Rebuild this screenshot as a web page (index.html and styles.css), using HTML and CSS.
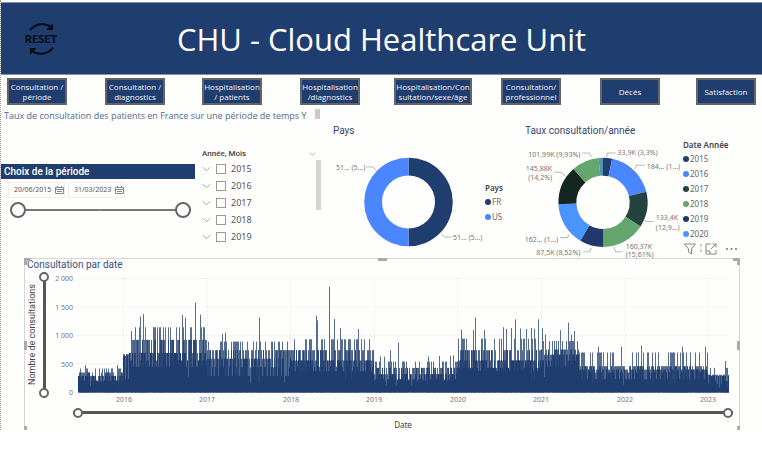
FILE: index.html
```html
<!DOCTYPE html>
<html lang="fr">
<head>
<meta charset="utf-8">
<title>CHU - Cloud Healthcare Unit</title>
<link rel="stylesheet" href="styles.css">
</head>
<body>
<div class="report">
  <header class="banner">
    <button class="reset" type="button" aria-label="Reset">
      <svg class="reset-arrow" viewBox="0 0 28 9"><path d="M2 7.500C8-.5 19-.5 25 5"/><path d="M26 0v7h-7z" class="tip"/></svg>
      <span class="reset-text">RESET</span>
      <svg class="reset-arrow" viewBox="0 0 28 9"><path d="M26 1.500C20 9.500 9 9.500 3 4"/><path d="M2 9V2h7z" class="tip"/></svg>
    </button>
    <h1 class="banner-title">CHU - Cloud Healthcare Unit</h1>
  </header>

  <nav class="tabs">
    <button type="button" class="tab">Consultation /<br>période</button>
    <button type="button" class="tab">Consultation /<br>diagnostics</button>
    <button type="button" class="tab">Hospitalisation<br>/ patients</button>
    <button type="button" class="tab">Hospitalisation<br>/diagnostics</button>
    <button type="button" class="tab tab-wide">Hospitalisation/Con<br>sultation/sexe/âge</button>
    <button type="button" class="tab">Consultation/<br>professionnel</button>
    <button type="button" class="tab">Décés</button>
    <button type="button" class="tab">Satisfaction</button>
  </nav>

  <div class="subtitle">
    <p>Taux de consultation des patients en France sur une période de temps Y</p>
    <span class="scroll-stub"></span>
  </div>

  <main>
    <div class="visuals">
      <section class="period">
        <h2 class="period-title">Choix de la période</h2>
        <div class="dates">
          <label class="date-box"><input type="text" value="20/06/2015" aria-label="Date de début"><svg viewBox="0 0 9 9"><path d="M.5 1.500h8v6h-8zM.5 3.500h8M2.500 0v2M6.500 0v2M2 5.500h5"/></svg></label>
          <label class="date-box"><input type="text" value="31/03/2023" aria-label="Date de fin"><svg viewBox="0 0 9 9"><path d="M.5 1.500h8v6h-8zM.5 3.500h8M2.500 0v2M6.500 0v2M2 5.500h5"/></svg></label>
        </div>
        <div class="range range-period">
          <input type="range" value="0" aria-label="Début de la période">
          <input type="range" value="100" aria-label="Fin de la période">
        </div>
      </section>

      <section class="years">
        <div class="years-head"><h2>Année, Mois</h2><svg class="chevron small" viewBox="0 0 10 6"><path d="M1 1l4 4 4-4"/></svg></div>
        <div class="years-body">
          <ul>
            <li><svg class="chevron" viewBox="0 0 10 6"><path d="M1 1l4 4 4-4"/></svg><label><input type="checkbox">2015</label></li>
            <li><svg class="chevron" viewBox="0 0 10 6"><path d="M1 1l4 4 4-4"/></svg><label><input type="checkbox">2016</label></li>
            <li><svg class="chevron" viewBox="0 0 10 6"><path d="M1 1l4 4 4-4"/></svg><label><input type="checkbox">2017</label></li>
            <li><svg class="chevron" viewBox="0 0 10 6"><path d="M1 1l4 4 4-4"/></svg><label><input type="checkbox">2018</label></li>
            <li><svg class="chevron" viewBox="0 0 10 6"><path d="M1 1l4 4 4-4"/></svg><label><input type="checkbox">2019</label></li>
          </ul>
          <span class="scrollbar"></span>
        </div>
      </section>

      <section class="donut donut-pays">
        <h2 class="visual-title">Pays</h2>
        <div class="donut-body">
          <svg class="donut-chart" viewBox="330 138 153 119" role="img" aria-label="Pays">
            <g id="ring-pays"></g>
            <path class="leader" d="M366 167h7l4 4M441 234l4 3h7"/>
            <text x="336" y="170">51... (5...)</text>
            <text x="453" y="240">51... (5...)</text>
          </svg>
          <div class="legend legend-pays">
            <h3>Pays</h3>
            <ul><li><i class="c-navy"></i>FR</li><li><i class="c-blue"></i>US</li></ul>
          </div>
        </div>
      </section>

      <section class="donut donut-taux">
        <h2 class="visual-title">Taux consultation/année</h2>
        <div class="donut-body">
          <svg class="donut-chart" viewBox="523 138 158 119" role="img" aria-label="Taux consultation par année">
            <g id="ring-taux"></g>
            <path class="leader" d="M583 153h7l2 4M616 153h-8l-1 4M645 165h-8l-2 4M555 172h7l4 4M654 221h-7l-3-1M561 237h7l2-3M584 251h6l2-4M623 251h-7l-2-5"/>
            <text x="581" y="157" class="end">101,99K (9,93%)</text>
            <text x="618" y="155">33,9K (3,3%)</text>
            <text x="647" y="169">184... (1...)</text>
            <text x="553" y="171" class="end">145,88K</text>
            <text x="553" y="180" class="end">(14,2%)</text>
            <text x="656" y="219">133,4K</text>
            <text x="656" y="229">(12,9...)</text>
            <text x="559" y="241" class="end">162... (1...)</text>
            <text x="581" y="254" class="end">87,5K (8,52%)</text>
            <text x="626" y="248">160,37K</text>
            <text x="626" y="256">(15,61%)</text>
          </svg>
          <div class="legend legend-taux">
            <h3>Date Année</h3>
            <ul>
              <li><i class="c-navy"></i>2015</li><li><i class="c-blue"></i>2016</li><li><i class="c-teal"></i>2017</li>
              <li><i class="c-green"></i>2018</li><li><i class="c-indigo"></i>2019</li><li><i class="c-sky"></i>2020</li>
            </ul>
            <div class="tools">
              <svg viewBox="0 0 54 12"><path d="M.5 1h11l-4 5v5l-3-2V6zM27 1h-5v10h10V7M22 8h4v3M27 6l5-5M28.500 1H32v3.500"/><path d="M16 2h2M16 5h1M16 8h2" /><circle cx="43" cy="6" r="1"/><circle cx="47.500" cy="6" r="1"/><circle cx="52" cy="6" r="1"/></svg>
            </div>
          </div>
        </div>
      </section>
    </div>

    <section class="timeline">
      <span class="grip tl"></span><span class="grip tc"></span><span class="grip tr"></span>
      <span class="grip ml"></span><span class="grip mr"></span><span class="grip bl"></span><span class="grip br"></span>
      <h2 class="visual-title">Consultation par date</h2>
      <div class="timeline-body">
        <div class="axis-name">Nombre de consultations</div>
        <div class="range range-y">
          <input type="range" value="0" aria-label="Maximum des consultations">
          <input type="range" value="100" aria-label="Minimum des consultations">
        </div>
        <svg class="plot" viewBox="52 270 687 135" role="img" aria-label="Consultation par date">
          <path class="gridline" d="M78 277.500H729M78 306H729M78 334.500H729M78 363H729M123.500 277V391M207.500 277V391M290.500 277V391M374.500 277V391M457.500 277V391M541.500 277V391M625 277V391M708 277V391"/>
          <g id="bars"></g>
          <g class="end"><text x="73" y="280">2 000</text><text x="73" y="309">1 500</text><text x="73" y="337">1 000</text><text x="73" y="366">500</text><text x="73" y="394">0</text></g>
          <g class="mid"><text x="124" y="401">2016</text><text x="207" y="401">2017</text><text x="291" y="401">2018</text><text x="374" y="401">2019</text><text x="458" y="401">2020</text><text x="541" y="401">2021</text><text x="625" y="401">2022</text><text x="708" y="401">2023</text></g>
        </svg>
      </div>
      <div class="range range-x">
        <input type="range" value="0" aria-label="Première date">
        <input type="range" value="100" aria-label="Dernière date">
      </div>
      <p class="axis-date">Date</p>
    </section>
  </main>
</div>
<script src="charts.js"></script>
</body>
</html>
```
FILE: styles.css
```css
* { box-sizing: border-box; }
body {
  margin: 0;
  background: #fff;
  color: #666;
  font-family: "Noto Sans", "Open Sans", sans-serif;
  font-size: 9px;
  line-height: 12px;
}
h1, h2, h3, p, ul { margin: 0; padding: 0; font-weight: 400; }
ul { list-style: none; }
button, input { font: inherit; margin: 0; padding: 0; }
svg { display: block; }

.report {
  padding-top: 2px;
  border-left: 1px dotted #999;
  background: #fefefd;
  overflow: hidden;
}

.banner {
  display: grid;
  grid-template-columns: 80px 1fr 80px;
  align-items: center;
  height: 73px;
  background: #203d6f;
  border-top: 1px solid #8494b0;
  border-bottom: 1px solid #8494b0;
}
.banner-title {
  color: #fff;
  font-family: "Open Sans", sans-serif;
  font-size: 31px;
  line-height: 40px;
  text-align: center;
  white-space: nowrap;
}
.reset {
  display: flex;
  flex-direction: column;
  align-items: center;
  border: 0;
  background: none;
  color: #070b14;
}
.reset-arrow { width: 27px; height: 9px; fill: none; stroke: #070b14; stroke-width: 2; }
.reset-arrow .tip { fill: #070b14; stroke: none; }
.reset-text { font-family: Lato, sans-serif; font-size: 11px; font-weight: 900; line-height: 14px; }

.tabs {
  display: grid;
  grid-template-columns: 98fr 97fr 98fr 94fr 107fr 99fr 96fr 66fr;
  padding: 3px 0 0 6px;
}
.tab {
  width: 60px;
  height: 27px;
  border: 2px solid #636468;
  background: #203d6f;
  color: #f0f3f8;
  font-family: "Open Sans", sans-serif;
  font-size: 8px;
  line-height: 10px;
  white-space: nowrap;
}
.tab-wide { width: 78px; }

.subtitle {
  display: flex;
  gap: 9px;
  height: 18px;
  padding: 4px 0 0 3px;
  color: #4f6b8c;
  font-family: "Open Sans", sans-serif;
  line-height: 14px;
}
.scroll-stub { width: 5px; height: 10px; background: #c9c9c9; }

.visuals {
  display: grid;
  grid-template-columns: minmax(0, 201fr) minmax(0, 128fr) minmax(0, 192fr) minmax(0, 240fr);
}

.period { padding: 41px 7px 0 0; }
.period-title {
  padding-left: 3px;
  background: #203d6f;
  color: #fff;
  font-family: Roboto, sans-serif;
  font-size: 10px;
  font-weight: 500;
  line-height: 15px;
}
.dates { display: flex; gap: 3px; padding: 3px 0 0 7px; }
.date-box {
  display: flex;
  align-items: center;
  width: 57px;
  height: 16px;
  padding-left: 5px;
  border: 1px solid #eee;
}
.date-box input { width: 41px; border: 0; background: none; color: #555; font-size: 7px; }
.date-box svg { width: 9px; height: 9px; fill: none; stroke: #888; }

.range { display: flex; }
.range input {
  appearance: none;
  flex: 1;
  min-width: 0;
  min-height: 0;
  background: none;
}
.range input::-webkit-slider-thumb {
  appearance: none;
  border: 2px solid #666;
  border-radius: 50%;
  background: #fff;
}
.range-period { padding: 4px 4px 0 9px; }
.range-period input { height: 16px; background: linear-gradient(#777, #777) center / 100% 2px no-repeat; }
.range-period input::-webkit-slider-thumb { width: 16px; height: 16px; }

.years { padding: 24px 9px 0 0; }
.years-head { display: flex; justify-content: space-between; align-items: center; padding-right: 5px; }
.years-head h2 { font-family: Roboto, sans-serif; font-size: 8px; font-weight: 500; color: #444; line-height: 13px; }
.years-body { display: flex; justify-content: space-between; }
.years li { display: flex; align-items: center; gap: 5px; height: 17px; }
.years label { display: flex; align-items: center; gap: 5px; color: #555; }
.years input { appearance: none; width: 10px; height: 10px; border: 1px solid #999; background: #fff; }
.chevron { width: 9px; height: 6px; fill: none; stroke: #999; }
.chevron.small { width: 7px; }
.scrollbar { width: 5px; height: 50px; background: #d5d3d1; }

.visual-title {
  padding-left: 3px;
  color: #33486f;
  font-family: Roboto, sans-serif;
  font-size: 10px;
  line-height: 14px;
}
.donut .visual-title { padding: 1px 0 0 3px; }
.donut-body { display: grid; align-items: start; }
.donut-pays .donut-body { grid-template-columns: minmax(0, 153fr) minmax(0, 39fr); }
.donut-taux .donut-body { grid-template-columns: minmax(0, 159fr) minmax(0, 81fr); }
.donut-chart { width: 100%; overflow: hidden; }
.donut-chart text { fill: #777; font-size: 7px; }
.leader { fill: none; stroke: #bbb; }
.end { text-anchor: end; }
.mid { text-anchor: middle; }
.legend { padding-left: 2px; }
.legend h3 { color: #444; font-size: 8px; font-weight: 600; line-height: 12px; white-space: nowrap; }
.legend li { display: flex; align-items: center; gap: 1px; height: 15px; font-size: 8px; }
.legend i { width: 6px; height: 6px; border-radius: 50%; }
.legend-pays { padding-top: 44px; }
.legend-taux { padding-top: 1px; }
.c-navy { background: #203d6f; }
.c-blue { background: #4a86ff; }
.c-teal { background: #24433f; }
.c-green { background: #65a56e; }
.c-indigo { background: #20386a; }
.c-sky { background: #4a94ff; }
.tools svg { width: 54px; height: 12px; margin: 2px 0 0 1px; fill: none; stroke: #888; }
.tools circle { fill: #777; stroke: none; }

.timeline {
  position: relative;
  height: 172px;
  margin: 0 22px 0 23px;
  border: 1px solid #d5d5d5;
  border-bottom: 0;
}
.timeline .visual-title { padding-left: 2px; color: #355282; line-height: 12px; }
.grip { position: absolute; background: #aaa; }
.tl { left: -1px; top: -1px; width: 7px; height: 7px; background: none; border: solid #aaa; border-width: 3px 0 0 3px; }
.tr { right: -1px; top: -1px; width: 7px; height: 7px; background: none; border: solid #aaa; border-width: 3px 3px 0 0; }
.tc { left: 50%; top: -1px; width: 9px; height: 3px; margin-left: -4px; }
.ml, .mr { top: 82px; width: 3px; height: 9px; }
.bl, .br { bottom: 0; width: 3px; height: 4px; }
.ml, .bl { left: -1px; }
.mr, .br { right: -1px; }
.timeline-body { display: grid; grid-template-columns: 14px 13px 1fr; align-items: start; }
.axis-name {
  height: 128px;
  writing-mode: vertical-rl;
  rotate: 180deg;
  color: #444;
  font-family: Roboto, sans-serif;
  font-size: 9px;
  line-height: 14px;
  text-align: center;
}
.range-y { flex-direction: column; height: 127px; padding-top: 1px; }
.range-y input { writing-mode: vertical-lr; width: 10px; background: linear-gradient(#555, #555) center / 3px 100% no-repeat; }
.range-y input::-webkit-slider-thumb, .range-x input::-webkit-slider-thumb { width: 10px; height: 10px; }
.plot { width: 100%; }
.plot text { fill: #777; font-size: 7px; }
.gridline { fill: none; stroke: #ddd; stroke-dasharray: 1 3; }
.bars-solid { stroke: #203d6f; }
.bars-mid { stroke: #203d6f; opacity: .8; }
.bars-soft { stroke: #203d6f; opacity: .75; }
.range-x { padding: 2px 6px 0 48px; }
.range-x input { height: 10px; background: linear-gradient(#555, #555) center / 100% 3px no-repeat; }
.axis-date { margin-top: 1px; padding-left: 42px; color: #444; font-size: 8px; line-height: 12px; text-align: center; }
```
FILE: charts.js
```javascript
const NS = "http://www.w3.org/2000/svg";

function add(parent, tag, attrs) {
  const el = document.createElementNS(NS, tag);
  for (const key in attrs) el.setAttribute(key, attrs[key]);
  parent.appendChild(el);
}

function ring(id, cx, cy, slices) {
  const group = document.getElementById(id);
  const outer = 44.3;
  const inner = 26.5;
  const total = slices.reduce((sum, slice) => sum + slice[0], 0);
  const point = (share, r) => {
    const angle = share / total * 2 * Math.PI;
    return (cx + r * Math.sin(angle)).toFixed(2) + " " + (cy - r * Math.cos(angle)).toFixed(2);
  };
  let start = 0;
  for (const [share, color] of slices) {
    const end = start + share;
    add(group, "path", {
      fill: color,
      d: `M${point(start, outer)}A${outer} ${outer} 0 0 1 ${point(end, outer)}L${point(end, inner)}A${inner} ${inner} 0 0 0 ${point(start, inner)}Z`
    });
    start = end;
  }
}

ring("ring-pays", 408.5, 202, [[50, "#203d6f"], [50, "#4a86ff"]]);
ring("ring-taux", 603.5, 202, [
  [3.3, "#203d6f"], [17.9, "#4a86ff"], [12.9, "#24433f"], [15.9, "#65a56e"], [8.5, "#20386a"],
  [15.8, "#4a94ff"], [14.2, "#142622"], [9.9, "#65a56e"], [1.6, "#4b94b4"]
]);

// Each period: first x, last x, then the volume levels from the base up.
const periods = [
  [78, 123, [190, 210, 290, 350, 420]],
  [123, 129, [230, 450, 640, 670, 670]],
  [129, 207, [450, 560, 690, 920, 1140]],
  [207, 291, [290, 440, 590, 740, 890]],
  [291, 374, [370, 450, 560, 740, 930]],
  [374, 458, [210, 230, 320, 430, 540]],
  [458, 541, [380, 430, 560, 740, 940]],
  [541, 579, [450, 560, 660, 750, 900]],
  [579, 708, [230, 350, 400, 460, 700]],
  [708, 729, [150, 200, 290, 310, 430]]
];
const peaks = [
  [85, 480], [117, 480], [131, 1075], [135, 1130], [140, 1330], [143, 1370], [153, 1145], [182, 1355],
  [185, 1310], [195, 1570], [200, 1360], [222, 1025], [225, 1045], [259, 1310], [316, 1345], [317, 1260],
  [329, 1850], [334, 1285], [340, 1130], [358, 1110], [380, 630], [384, 630], [390, 740], [398, 870],
  [428, 630], [439, 640], [450, 640], [453, 650], [461, 1100], [473, 1090], [475, 1310], [484, 1095],
  [503, 1140], [506, 1110], [511, 1130], [515, 1280], [520, 1120], [526, 1110], [531, 1130], [534, 1115],
  [538, 1280], [542, 1120], [545, 1010], [560, 1090], [568, 1220], [571, 1010], [574, 1075], [598, 800],
  [621, 800], [641, 820], [682, 800], [705, 800], [725, 550]
];

let seed = 20150620;
function random() {
  seed = (seed * 1103515245 + 12345) % 2147483648;
  return seed / 2147483648;
}
const height = value => (391.5 - value * 0.0572).toFixed(1);
const bar = (x, value) => `M${x + 0.5} 391.5V${height(value)}`;
let solid = "";
let mid = "";
let soft = "";
for (const [from, to, levels] of periods) {
  for (let x = from; x < to; x++) {
    const r = random();
    const low = r < 0.03 ? levels[0] * 0.6 : r < 0.45 ? levels[0] : r < 0.7 ? levels[1] : levels[2];
    const s = random();
    const middle = s < 0.15 ? levels[1] : s < 0.6 ? levels[2] : levels[3];
    solid += bar(x, low);
    mid += bar(x, Math.max(low, middle));
    const t = random();
    if (t < 0.55) soft += bar(x, t < 0.3 ? levels[4] : levels[3]);
  }
}
for (const [x, value] of peaks) soft += bar(x, value);
const bars = document.getElementById("bars");
add(bars, "path", { d: soft, class: "bars-soft" });
add(bars, "path", { d: mid, class: "bars-mid" });
add(bars, "path", { d: solid, class: "bars-solid" });
```
